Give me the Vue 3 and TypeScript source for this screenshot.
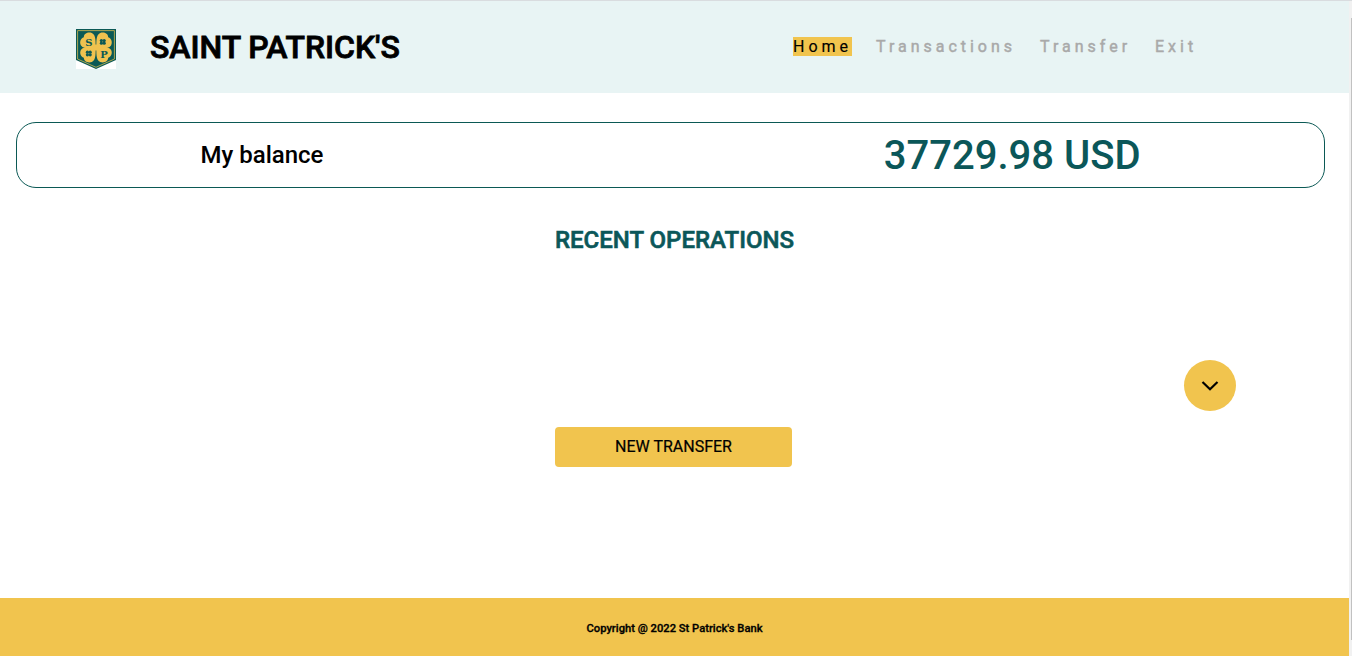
<script setup lang="ts">
interface NavItem { label: string; active?: boolean }

const navItems: NavItem[] = [
  { label: 'Home', active: true },
  { label: 'Transactions' },
  { label: 'Transfer' },
  { label: 'Exit' },
]
const balance = '37729.98 USD'
</script>

<template>
  <div class="window">
    <div class="page">
      <header class="header">
        <svg class="logo" viewBox="0 0 40 40" aria-label="Saint Patrick's">
          <rect width="40" height="40" fill="#fff" />
          <path d="M0 0H40V31L20 40L0 31Z" fill="#0b5955" />
          <path d="M1.6 1.6H38.4V30L20 38.3L1.6 30Z" fill="none" stroke="#d3b951" stroke-width="0.8" />
          <g fill="#efc24f">
            <path d="M19.6 18.8C14 19.8 7.4 19.8 5 16.4C3.2 13 4.6 9.4 7.8 8.2C8 4.4 12 2.8 15.8 4C20.2 6 19.6 13 19.6 18.8Z" />
            <path d="M20.4 18.8C26 19.8 32.6 19.8 35 16.4C36.8 13 35.4 9.4 32.2 8.2C32 4.4 28 2.8 24.2 4C19.8 6 20.4 13 20.4 18.8Z" />
            <path d="M19.6 18C14 17.4 7.4 17.4 5 20.8C3.2 24 4.6 27.6 7.8 28.8C8 32.6 12 34.2 15.8 33C20.2 31 19.6 24 19.6 18Z" />
            <path d="M20.4 18C26 17.4 32.6 17.4 35 20.8C36.8 24 35.4 27.6 32.2 28.8C32 32.6 28 34.2 24.2 33C19.8 31 20.4 24 20.4 18Z" />
            <rect x="17.5" y="15.5" width="5" height="6" />
          </g>
          <g fill="#0b5955">
            <text class="initial" x="12.8" y="16.6">S</text>
            <text class="initial" x="27.9" y="28.6">P</text>
            <g v-for="[x, y] in [[26.8, 12.9], [12.8, 24.5]]" :key="x">
              <circle :cx="x - 1.4" :cy="y - 1.3" r="1.6" />
              <circle :cx="x + 1.4" :cy="y - 1.3" r="1.6" />
              <circle :cx="x - 1.4" :cy="y + 1.3" r="1.6" />
              <circle :cx="x + 1.4" :cy="y + 1.3" r="1.6" />
            </g>
          </g>
        </svg>
        <h1 class="brand">SAINT PATRICK'S</h1>
        <nav class="nav">
          <a v-for="item in navItems" :key="item.label" :class="{ active: item.active }">{{ item.label }}</a>
        </nav>
      </header>

      <main class="main">
        <section class="balance">
          <div class="balance-label">My balance</div>
          <div class="balance-value">{{ balance }}</div>
        </section>
        <h2 class="heading">RECENT OPERATIONS</h2>
        <button class="expand" aria-label="Show operations">
          <svg width="18" height="12" viewBox="0 0 18 12">
            <path d="M1.5 2L9 9.3L16.5 2" fill="none" stroke="#000" stroke-width="2.2" />
          </svg>
        </button>
        <button class="transfer">NEW TRANSFER</button>
      </main>

      <footer class="footer">Copyright @ 2022 St Patrick's Bank</footer>
    </div>
    <div class="scrollbar"><div class="thumb"></div></div>
  </div>
</template>

<style>
body { margin: 0; overflow: hidden; }
</style>

<style scoped>
.window {
  display: flex;
  box-sizing: border-box;
  width: 1352px;
  height: 656px;
  border-top: 1px solid #d9dcdf;
  background: #fff;
  color: #000;
  font-family: Roboto, sans-serif;
  font-weight: 500;
}
.page { display: flex; flex-direction: column; width: 1349px; }
.header {
  display: flex;
  box-sizing: border-box;
  height: 92px;
  padding-left: 76px;
  background: #e8f4f4;
}
.logo { width: 40px; height: 40px; margin-top: 28px; }
.initial { font: 700 10px "DejaVu Serif", serif; text-anchor: middle; }
.brand {
  width: 643px;
  margin: 27px 0 0 34px;
  font-size: 32px;
  line-height: 38px;
  font-weight: 500;
  letter-spacing: -0.05px;
  -webkit-text-stroke: 0.8px #000;
}
.nav {
  display: flex;
  align-items: flex-start;
  gap: 24px;
  margin-top: 36px;
  font-size: 16px;
  line-height: 19px;
  font-weight: 400;
  letter-spacing: 3.98px;
  color: #a9a9a9;
  -webkit-text-stroke: 0.45px currentColor;
}
.nav .active { background: #f1c44e; color: #000; -webkit-text-stroke-width: 0.15px; }
.main { display: flex; flex-direction: column; height: 505px; }
.balance {
  display: grid;
  grid-template-columns: 490px 1fr;
  box-sizing: border-box;
  align-items: center;
  width: 1309px;
  height: 66px;
  margin: 29px 0 0 16px;
  border: 1px solid #0b5955;
  border-radius: 20px;
  text-align: center;
}
.balance-label { font-size: 24px; }
.balance-value { padding: 2px 183.5px 0 0; font-size: 40px; line-height: 62px; color: #0b5759; text-align: right; }
.heading {
  margin: 38px 0 0;
  font-size: 24px;
  line-height: 28px;
  font-weight: 500;
  color: #0b5759;
  text-align: center;
  -webkit-text-stroke: 0.6px #0b5759;
}
button { padding: 0; border: 0; background: #f1c44e; color: #000; font: inherit; }
.expand {
  display: flex;
  align-items: center;
  justify-content: center;
  align-self: flex-end;
  width: 52px;
  height: 51px;
  margin: 106px 113px 0 0;
  border-radius: 50%;
}
.transfer {
  width: 237px;
  height: 40px;
  margin: 16px 0 0 555px;
  padding-bottom: 2px;
  border-radius: 4px;
  font-size: 16px;
  font-weight: 400;
  -webkit-text-stroke: 0.2px #000;
}
.footer {
  height: 58px;
  background: #f1c44e;
  font-size: 11.2px;
  line-height: 61px;
  text-align: center;
  -webkit-text-stroke: 0.3px #000;
}
.scrollbar { box-sizing: border-box; width: 3px; padding: 17px 0 0 2px; background: #f1f1f1; }
.thumb { height: 622px; background: #c1c1c1; }
</style>
